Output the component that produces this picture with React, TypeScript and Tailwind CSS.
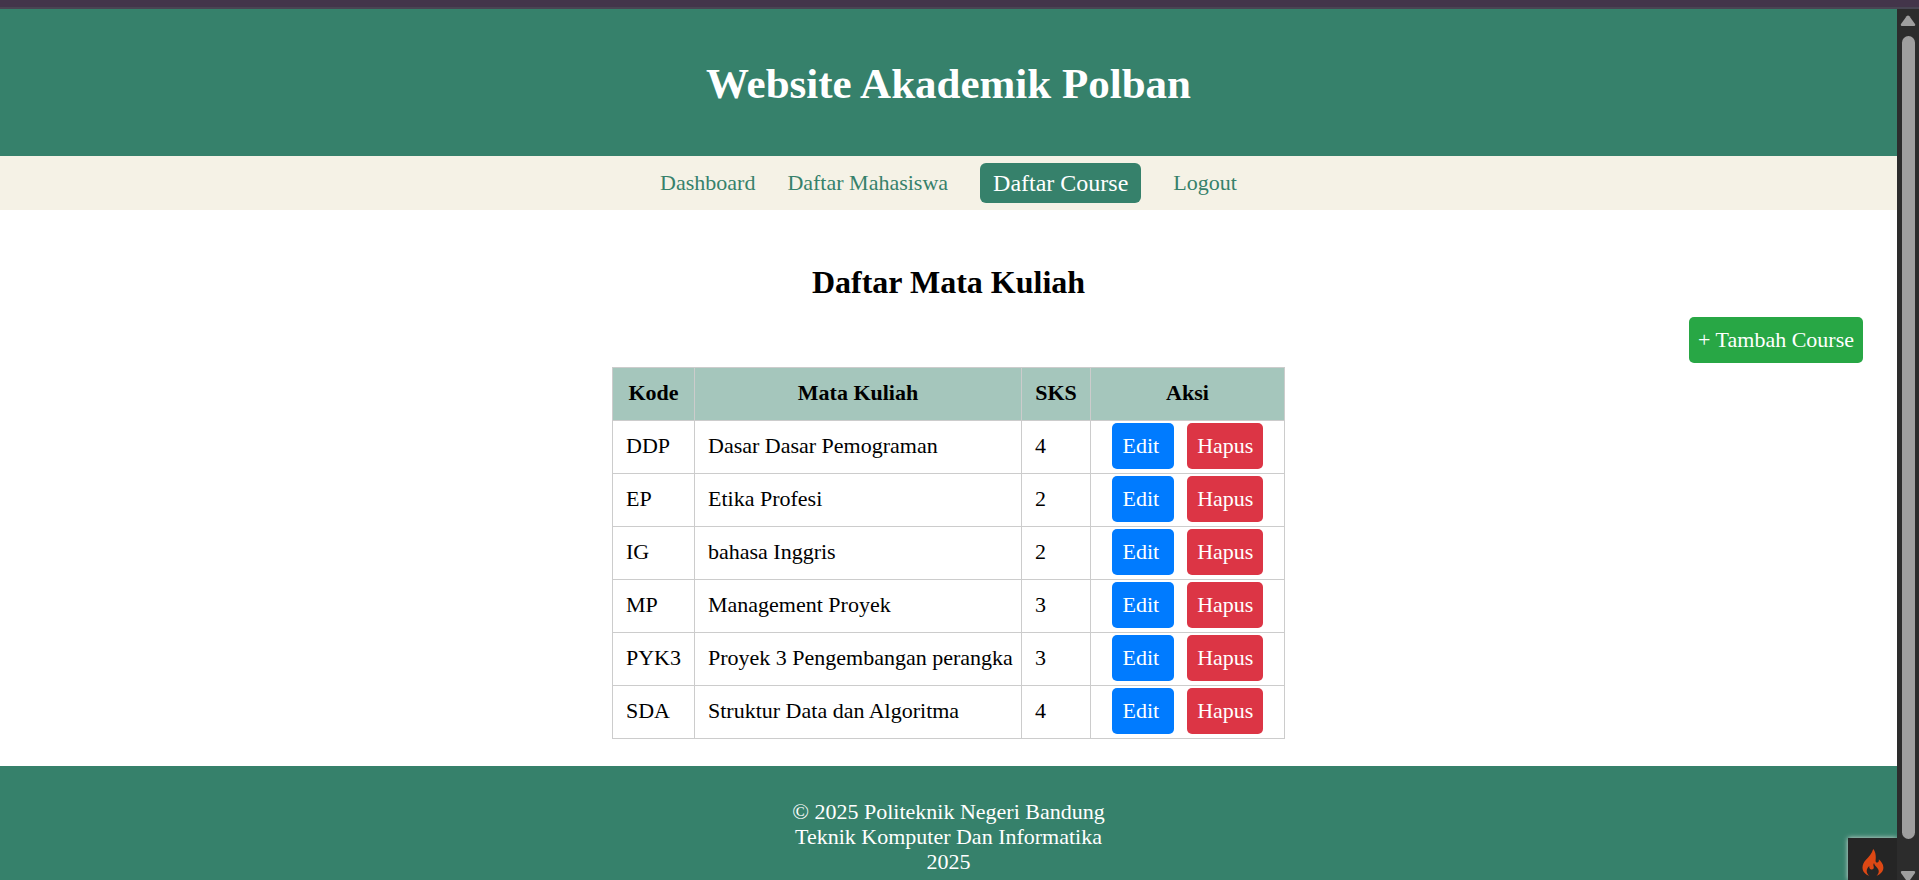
const courses = [
  { code: "DDP", name: "Dasar Dasar Pemograman", credits: 4 },
  { code: "EP", name: "Etika Profesi", credits: 2 },
  { code: "IG", name: "bahasa Inggris", credits: 2 },
  { code: "MP", name: "Management Proyek", credits: 3 },
  { code: "PYK3", name: "Proyek 3 Pengembangan perangka", credits: 3 },
  { code: "SDA", name: "Struktur Data dan Algoritma", credits: 4 },
];

const links = ["Dashboard", "Daftar Mahasiswa", "Daftar Course", "Logout"];

function Header() {
  return (
    <header className="bg-[#36816b] pt-[49px] pb-[47px] text-center text-white">
      <h1 className="text-[43px] leading-[51px] font-bold">Website Akademik Polban</h1>
    </header>
  );
}

function Nav() {
  return (
    <nav className="flex items-center justify-center gap-8 bg-[#f5f2e6] py-[7px]">
      {links.map((label) => (
        <a
          key={label}
          href="#"
          className={
            label === "Daftar Course"
              ? "rounded-md bg-[#36816b] px-[13px] py-[7px] text-[24px] leading-[26px] text-white"
              : "text-[22px] leading-[26px] text-[#36816b]"
          }
        >
          {label}
        </a>
      ))}
    </nav>
  );
}

function CourseTable() {
  return (
    <table className="mx-auto table-fixed border-collapse">
      <colgroup>
        <col className="w-[82px]" />
        <col className="w-[327px]" />
        <col className="w-[69px]" />
        <col className="w-[194px]" />
      </colgroup>
      <thead className="bg-[#a5c6bc]">
        <tr>
          {["Kode", "Mata Kuliah", "SKS", "Aksi"].map((title) => (
            <th key={title} className="border border-[#cccccc] pt-3 pb-[14px] font-bold">
              {title}
            </th>
          ))}
        </tr>
      </thead>
      <tbody>
        {courses.map((course) => (
          <tr key={course.code}>
            <td className="border border-[#cccccc] pb-[2px] pl-[13px]">{course.code}</td>
            <td className="border border-[#cccccc] pb-[2px] pl-[13px] whitespace-nowrap">{course.name}</td>
            <td className="border border-[#cccccc] pb-[2px] pl-[13px]">{course.credits}</td>
            <td className="border border-[#cccccc] pt-[2px] pb-1">
              <div className="flex justify-center gap-[13px]">
                <button type="button" className="rounded-[5px] bg-[#007bff] py-[10px] pr-[15px] pl-[11px] text-white">
                  Edit
                </button>
                <button type="button" className="rounded-[5px] bg-[#dc3545] px-[10px] py-[10px] text-white">
                  Hapus
                </button>
              </div>
            </td>
          </tr>
        ))}
      </tbody>
    </table>
  );
}

function Scrollbar() {
  return (
    <div aria-hidden="true" className="flex w-[22px] shrink-0 flex-col items-center bg-[#2c2c2c] pt-[6px]">
      <svg width="16" height="12" viewBox="0 0 16 12" fill="#9f9f9f">
        <path d="M6.6 1.2Q8 -.3 9.4 1.2L15 9Q15.8 11 14 11H2Q.2 11 1 9Z" />
      </svg>
      <div className="mt-[9px] w-[13px] flex-1 rounded-full bg-[#9f9f9f]" />
      <svg className="mt-8 shrink-0" width="16" height="9" viewBox="0 0 16 9" fill="#9f9f9f">
        <path d="M2 0H14Q15.8 0 15 2L10 9H6L1 2Q.2 0 2 0Z" />
      </svg>
    </div>
  );
}

function DebugButton() {
  return (
    <button
      type="button"
      aria-label="Debug toolbar"
      className="absolute right-0 bottom-0 flex h-[42px] w-[49px] justify-center bg-[#252525] pt-[11px] shadow-[0_0_5px_#dddddd]"
    >
      <svg width="22" height="28" viewBox="0 0 22 28" fill="#dd4814">
        <path d="M11.2 0C9.9 4.8 6.8 7.6 4 10.8C1.8 13.3.5 15.6.5 18.5C.5 22.3 3 25.3 7.3 26.8C5.6 25.4 4.7 23.8 4.7 22C4.7 20 5.9 18.3 7.3 17C7 18.7 7.7 20.1 9.1 20.5C10.9 21 12.2 19.6 11.7 17.8C11.3 16.4 11.2 15.2 12 14C12.4 16.2 14 17.4 15.3 18.9C17.6 21.5 17.1 24.6 14.5 26.8C18.5 25.5 21.4 22.5 21.4 18.6C21.4 15 19.1 12.7 16.8 10.3C17.1 11.8 16.7 13 15.6 13.4C14.3 13.8 13.4 12.8 13.6 11.4C14 8.4 14.1 3.5 11.2 0Z" />
      </svg>
    </button>
  );
}

export default function App() {
  return (
    <div className="flex h-screen flex-col overflow-hidden bg-white font-['Liberation_Serif',serif] text-[22px] leading-[26px] text-black">
      <div className="h-[9px] shrink-0 border-b-2 border-[#484653] bg-[#43354a]" />
      <div className="flex min-h-0 flex-1">
        <div className="relative min-w-0 flex-1 overflow-hidden">
          <Header />
          <Nav />
          <main className="pt-[54px] pb-[27px]">
            <h2 className="text-center text-[32px] leading-[36px] font-bold">Daftar Mata Kuliah</h2>
            <div className="mt-[17px] mb-1 flex justify-end pr-[34px]">
              <button type="button" className="rounded-[5px] bg-[#28a745] px-[9px] py-[10px] text-white">
                + Tambah Course
              </button>
            </div>
            <CourseTable />
          </main>
          <footer className="bg-[#36816b] pt-[33px] pb-8 text-center leading-[25px] text-white">
            <p>© 2025 Politeknik Negeri Bandung</p>
            <p>Teknik Komputer Dan Informatika</p>
            <p>2025</p>
          </footer>
          <DebugButton />
        </div>
        <Scrollbar />
      </div>
    </div>
  );
}
